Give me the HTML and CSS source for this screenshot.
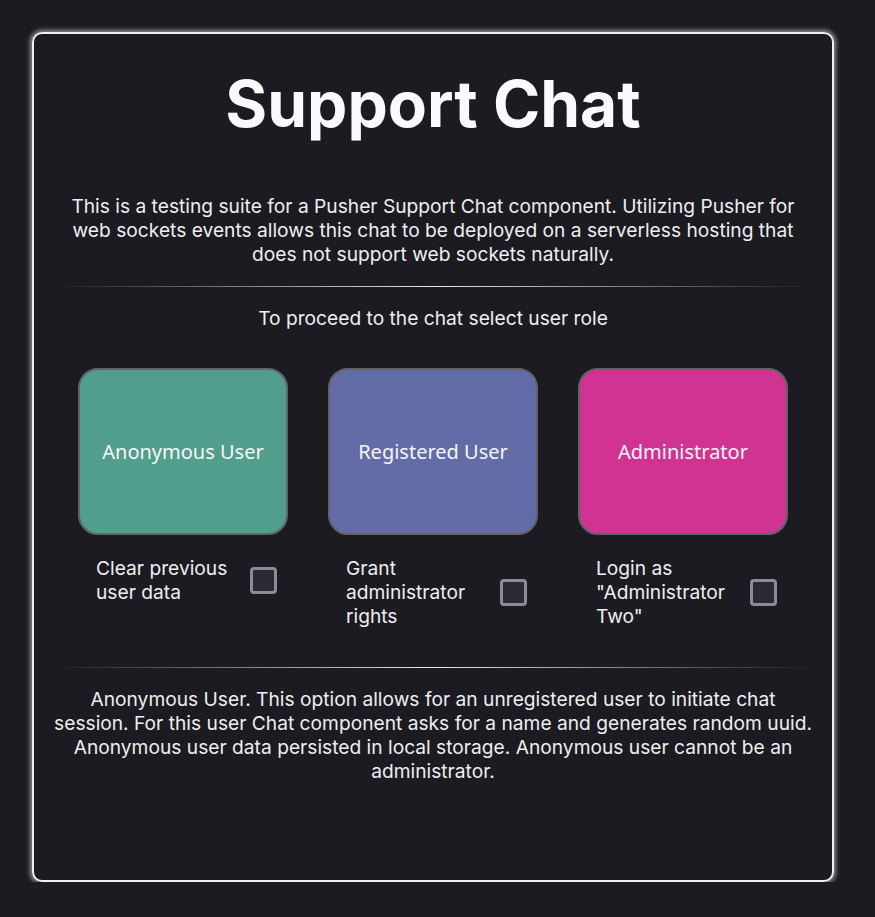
FILE: index.html
```html
<!DOCTYPE html>
<html lang="en">
<head>
<meta charset="utf-8">
<title>Support Chat</title>
<link rel="stylesheet" href="styles.css">
</head>
<body>
<main class="card">
  <h1 class="title">Support Chat</h1>
  <p class="intro">This is a testing suite for a Pusher Support Chat component. Utilizing Pusher for web sockets events allows this chat to be deployed on a serverless hosting that does not support web sockets naturally.</p>
  <hr class="sep">
  <p class="prompt">To proceed to the chat select user role</p>
  <div class="roles">
    <div class="role">
      <button class="role-btn anon">Anonymous User</button>
      <label class="option">
        <span class="option-text">Clear previous user data</span>
        <span class="check"></span>
      </label>
    </div>
    <div class="role">
      <button class="role-btn reg">Registered User</button>
      <label class="option">
        <span class="option-text">Grant administrator rights</span>
        <span class="check"></span>
      </label>
    </div>
    <div class="role">
      <button class="role-btn admin">Administrator</button>
      <label class="option">
        <span class="option-text">Login as "Administrator Two"</span>
        <span class="check"></span>
      </label>
    </div>
  </div>
  <hr class="sep sep2">
  <p class="desc">Anonymous User. This option allows for an unregistered user to initiate chat session. For this user Chat component asks for a name and generates random uuid. Anonymous user data persisted in local storage. Anonymous user cannot be an administrator.</p>
</main>
</body>
</html>
```

FILE: styles.css
```css
* { box-sizing: border-box; }
html, body { margin: 0; padding: 0; }
body {
  background: #1c1b21;
  font-family: Inter, "Noto Sans", sans-serif;
  color: #eeeef0;
}
.card {
  margin: 32px 0 0 32px;
  width: 802px;
  height: 850px;
  border: 2px solid #f0f0f0;
  border-radius: 10px;
  box-shadow: 0 0 4px 2px rgba(255,255,255,0.5);
  padding: 36px 20px 20px;
}
.title {
  margin: 0;
  font-size: 64px;
  line-height: 67px;
  font-weight: 700;
  text-align: center;
  color: #fafafc;
}
.intro, .prompt, .desc {
  margin: 0;
  font-size: 19.2px;
  line-height: 24px;
  text-align: center;
}
.intro { margin-top: 57px; }
.sep {
  border: 0;
  height: 1px;
  margin: 20px 0 0;
  background: linear-gradient(to right, rgba(255,255,255,0), rgba(255,255,255,0.9) 50%, rgba(255,255,255,0));
}
.prompt { margin-top: 19px; }
.roles {
  margin-top: 38px;
  display: flex;
  justify-content: center;
  gap: 40px;
}
.role {
  width: 210px;
  display: flex;
  flex-direction: column;
}
.role-btn {
  width: 210px;
  height: 167px;
  border: 2px solid #636268;
  border-radius: 20px;
  font-family: "Noto Sans", "Open Sans", sans-serif;
  font-size: 20px;
  color: #f6f6f8;
  cursor: pointer;
}
.anon { background: #529e8c; }
.reg { background: #626ca6; }
.admin { background: #d13392; }
.option {
  margin-top: 21px;
  display: flex;
  align-items: center;
  gap: 10px;
  padding: 0 11px 0 18px;
}
.option-text {
  flex: 1;
  font-size: 19.2px;
  line-height: 24px;
}
.check {
  width: 27px;
  height: 27px;
  flex: none;
  border: 3px solid #8e8b97;
  border-radius: 4px;
  background: #2b2a33;
}
.sep2 { margin-top: 39px; }
.desc { margin-top: 19px; }
```
